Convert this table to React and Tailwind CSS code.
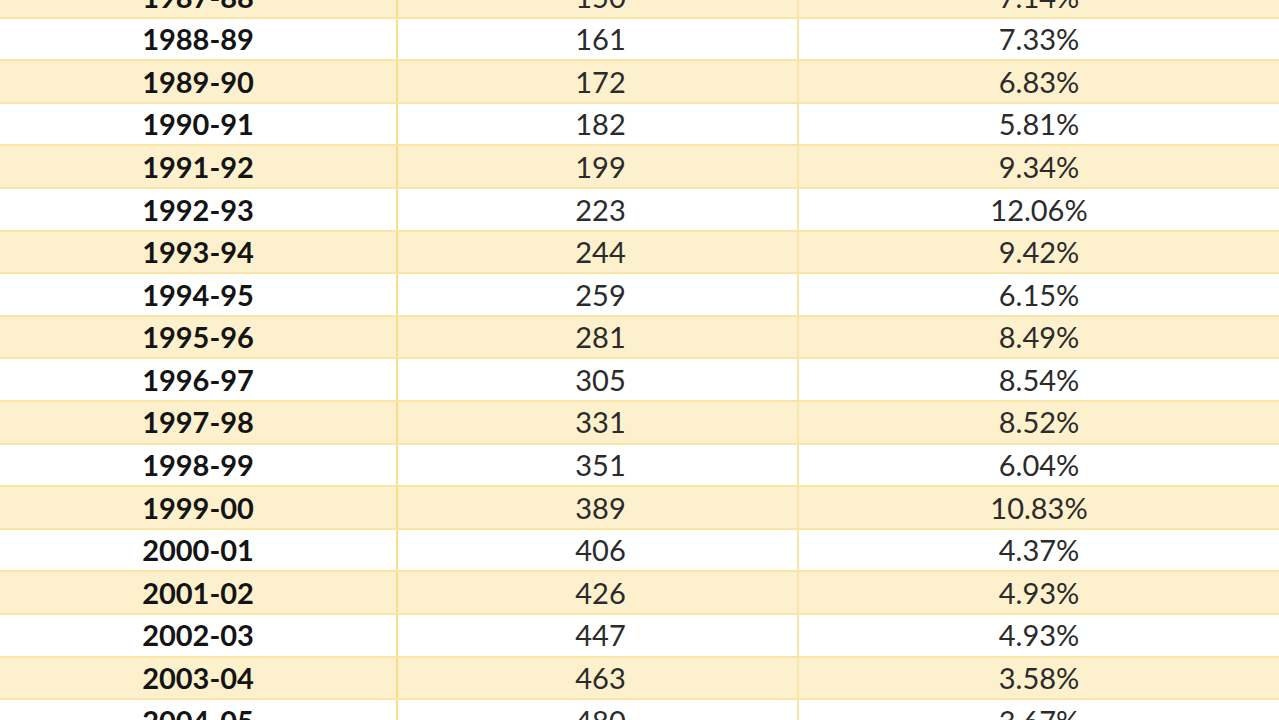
import React from 'react';

const rows = [
    ['1987-88', '150', '7.14%'],
    ['1988-89', '161', '7.33%'],
    ['1989-90', '172', '6.83%'],
    ['1990-91', '182', '5.81%'],
    ['1991-92', '199', '9.34%'],
    ['1992-93', '223', '12.06%'],
    ['1993-94', '244', '9.42%'],
    ['1994-95', '259', '6.15%'],
    ['1995-96', '281', '8.49%'],
    ['1996-97', '305', '8.54%'],
    ['1997-98', '331', '8.52%'],
    ['1998-99', '351', '6.04%'],
    ['1999-00', '389', '10.83%'],
    ['2000-01', '406', '4.37%'],
    ['2001-02', '426', '4.93%'],
    ['2002-03', '447', '4.93%'],
    ['2003-04', '463', '3.58%'],
    ['2004-05', '480', '3.67%'],
];

export default function App() {
    return (
        <div className="h-[720px] w-full overflow-hidden bg-white font-['Lato','Liberation_Sans',sans-serif]">
            <div className="mt-[-24px]">
                {rows.map(([year, value, growth], i) => (
                    <div
                        key={year}
                        className={`flex h-[42.6px] items-center border-b-2 border-[#fae5a6] ${i % 2 === 0 ? 'bg-[#fdf0cc]' : 'bg-white'}`}
                    >
                        <div className="flex h-full w-[398px] shrink-0 items-center justify-center border-r-2 border-[#f6df88] text-[29px] font-bold text-[#141414]">
                            {year}
                        </div>
                        <div className="flex h-full w-[401px] shrink-0 items-center justify-center border-r-2 border-[#f8e6a8] pl-[6px] text-[29px] text-[#2b2b2b]">
                            {value}
                        </div>
                        <div className="flex h-full flex-1 items-center justify-center text-[29px] text-[#2b2b2b]">
                            {growth}
                        </div>
                    </div>
                ))}
            </div>
        </div>
    );
}
